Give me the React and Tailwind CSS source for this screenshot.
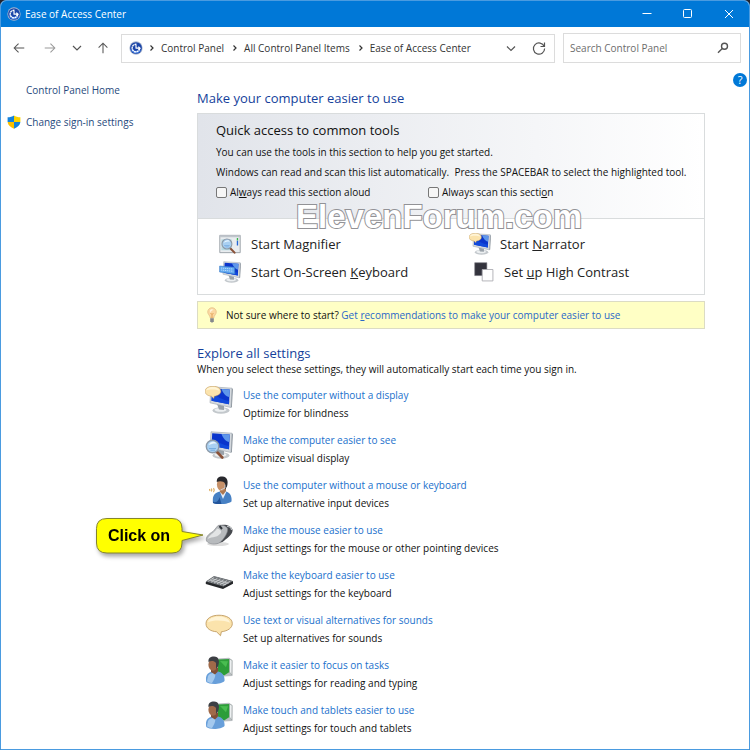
import React from "react";

function EaseLogo({ className }) {
  return (
    <svg viewBox="0 0 16 16" className={className} aria-hidden="true">
      <circle cx="8" cy="8" r="7.6" fill="#a9b6cf" />
      <circle cx="8" cy="8" r="6.7" fill="#1b45a8" />
      <path d="M2.2 8.5a5.8 5.8 0 0 0 11.4 1.2C11.500 11.500 5.500 12.500 2.200 8.500z" fill="#3f7be0" />
      <path d="M8.600 3.800A4.300 4.300 0 1 0 12.200 8" fill="none" stroke="#fff" strokeWidth="1.500" strokeDasharray="2.400 .5" />
      <path d="M8 8.300V4.600M7.500 8.200h4.800M10.700 6.400l2 1.800-2 1.600" fill="none" stroke="#fff" strokeWidth="1.300" />
    </svg>
  );
}

function Line({ d, className, width = 1.2 }) {
  return (
    <svg viewBox="0 0 16 16" className={className} fill="none" stroke="currentColor" strokeWidth={width} aria-hidden="true">
      <path d={d} />
    </svg>
  );
}

function Shield() {
  return (
    <svg viewBox="0 0 14 14" className="size-[14px] shrink-0" aria-hidden="true">
      <path d="M7 .4C5.500 1.600 3 2.200.6 2.200V7H7z" fill="#1583dc" />
      <path d="M7 .4C8.500 1.600 11 2.200 13.400 2.200V7H7z" fill="#fbd400" />
      <path d="M.6 7C.9 10.200 3.600 12.400 7 13.700V7z" fill="#fbc000" />
      <path d="M13.400 7C13.100 10.200 10.400 12.400 7 13.700V7z" fill="#1583dc" />
    </svg>
  );
}

function Monitor() {
  return (
    <>
      <ellipse cx="16" cy="24.500" rx="8.500" ry="3.300" fill="#c3c8cc" />
      <ellipse cx="15.500" cy="23.800" rx="6" ry="1.900" fill="#eceff1" />
      <path d="M12 18l7 2v4l-5-.5z" fill="#9aa2aa" />
      <path d="M6 .8L27 2.200 26 21.500 5 16.800z" fill="#d5dadf" stroke="#9ba3ab" strokeWidth=".6" />
      <path d="M27 2.200l.9 1-1 18-.9.300z" fill="#8b949d" />
      <path d="M7.200 2.300L24.800 3.500 24 18.300 6.500 14.800z" fill="#0a35cc" />
      <path d="M16.500 2.900l8.300.6-.5 7.500C21 10.500 18 7 16.500 2.900z" fill="#5f97ea" />
      <path d="M7 8c5 2 10 6 17.100 7l-.1 3.300L6.500 14.800z" fill="#1149dc" />
    </>
  );
}

function Bubble({ transform }) {
  return (
    <g transform={transform}>
      <path d="M14 4C6.500 4 1 7.500 1 13s5 8.300 10.500 8.800L15.500 26l.9-4.200C23 21 27.300 17.500 27.300 13 27.300 7.500 21.500 4 14 4z" fill="#fbe3ac" stroke="#b68e50" strokeWidth=".8" />
      <path d="M14 5.500C8 5.500 3.500 8 3 11.500 8 9 19 9 25 12 24 8 19.500 5.500 14 5.500z" fill="#fff4d6" />
    </g>
  );
}

function Lens({ transform }) {
  return (
    <g transform={transform}>
      <path d="M11.500 20.500l5.800 6" stroke="#8a5138" strokeWidth="2.600" strokeLinecap="round" />
      <circle cx="7.600" cy="15.500" r="6.300" fill="#a9d0f2" stroke="#8d9aa8" strokeWidth="1.400" />
      <path d="M3.500 14c1.500-3.500 6-4.500 8-1.500-3-.2-5.500.5-8 1.500z" fill="#e9f6ff" />
      <path d="M4 17.500h7M5.500 19.200h4.500" stroke="#6ba4dc" strokeWidth=".8" />
    </g>
  );
}

function HeadsetPerson() {
  return (
    <>
      <path d="M8 27c-.8-6 .5-10 7-11.500h6c4.500 1.500 6 5 5.500 10-4 3-13.500 3.500-18.500 1.500z" fill="#4781c4" />
      <path d="M15 16l3 7 3.500-7.500z" fill="#e6eef8" />
      <path d="M8 25.500c3 2 6-1 6.500-4.500l2 7c-3 .3-6 0-8.500-1z" fill="#22549b" />
      <path d="M15 12v4l3 3 3-4v-4z" fill="#ad7850" />
      <ellipse cx="16.500" cy="8.500" rx="4.600" ry="6.500" fill="#c69068" />
      <path d="M11.800 6C11.500 2 14 .3 17.500.5c5 .2 6 5 4.500 10l-2 3V7.500c-1-2-5-3-8.200-1.500z" fill="#28282d" />
      <path d="M20 8.500v3.500l-4.500 2" stroke="#d0d4da" strokeWidth=".9" fill="none" />
      <path d="M8.500 12.200q1.500 2 0 4M6.300 12.500q1.100 1.500 0 3M4.500 13l.5 2" stroke="#dda958" strokeWidth="1.100" fill="none" />
    </>
  );
}

function Mouse() {
  return (
    <g transform="translate(0 1)">
      <ellipse cx="13" cy="22" rx="11" ry="2" fill="#dcdcdc" />
      <path d="M14 3.500C19 1.500 26 3 27.500 7.500c.8 5-5.500 9-10 12.500L9 22z" fill="#46494e" />
      <path d="M13 3.500c4-.8 8 0 9.500 3 .8 4-3.500 10.500-7.500 14-4 2.500-11 2-13.500-1.500-1-4 2-7 6.500-9.500z" fill="#b7babd" stroke="#83878b" strokeWidth=".6" />
      <path d="M12 6.500c-2 4-8.500 7-9.500 11 2-3 9-1 13-6 1.500-2 .5-4-3.500-5z" fill="#e2e4e5" />
      <path d="M14.500 4l2.500 3" stroke="#30353b" strokeWidth="2" />
      <path d="M22 4.500c3 0 4.500 1.500 4.500 3.500" stroke="#c2c5c8" strokeWidth="1.200" fill="none" />
    </g>
  );
}

function Keyboard() {
  return (
    <g transform="translate(0 1)">
      <path d="M.8 15L9 9.500l19 4.800v2.500L18 22 .8 17z" fill="#25272a" />
      <path d="M.8 14.500L9 9l19 5-9.500 5.500z" fill="#74787c" />
      <path d="M3 14.400L9.200 10.500M6 15.200l6.500-4M9 16l6.500-4M12 16.800l6.800-4M15 17.600l7-4M18 18.400l7-4M5 13.100l16 4.500M7 11.800l16.500 4.500" stroke="#d3d5d7" strokeWidth=".75" />
    </g>
  );
}

function BookPerson() {
  return (
    <>
      <path d="M13 2.500l11-.7 3.500 2.500V20l-9 .5z" fill="#b9bec1" />
      <path d="M13 3.500l11.500-.5v13L19 19.500l-6-3z" fill="#2d9d39" />
      <path d="M24.500 3l2.500 1.500-.2 14.500-2.300-3z" fill="#edf0f1" stroke="#8c9593" strokeWidth=".5" />
      <path d="M15 5l8 .2-2 6z" fill="#49bd50" />
      <path d="M1.300 26C0 20 2.500 16 8 15.500h5c5 1 7 5 6.500 9.500-3 3.500-15 4-18.200 1z" fill="#689fda" />
      <path d="M3 20c2-3 4-3 7-3 1 3-1 7-3 10-3-.3-4.500-1-5-2z" fill="#a4c9ee" />
      <path d="M6 11v5l4 2.500 3-3v-4z" fill="#805037" />
      <ellipse cx="8" cy="8.800" rx="4.600" ry="6" fill="#a06a49" />
      <path d="M3.500 6C3 2 5.500.4 9 .4c5 0 6 5 4 10l-2 2.500V7C9 4.500 6 4.500 3.500 6z" fill="#3d3f44" />
    </>
  );
}

function Art({ children, className = "size-7" }) {
  return (
    <svg viewBox="0 0 28 28" className={className} aria-hidden="true">
      {children}
    </svg>
  );
}

const narratorArt = (
  <>
    <Monitor />
    <Bubble transform="translate(-.5 -2) scale(.6 .56)" />
  </>
);

const magnifierArt = (
  <>
    <path d="M1 3h26v22H1z" fill="#e9ecef" stroke="#9aa1a8" strokeWidth="1.200" />
    <path d="M1 3h26v2.500H1z" fill="#bfc5cb" />
    <path d="M3 8h13v14H3z" fill="#b9dbe2" />
    <path d="M23.500 6.500v3" stroke="#36b44b" strokeWidth="1.700" />
    <path d="M23.500 10v6" stroke="#2465d6" strokeWidth="1.700" />
    <Lens transform="translate(2.500 -1.500)" />
  </>
);

const oskArt = (
  <>
    <Monitor />
    <path d="M.8 6.500L20 8v8.500L.8 14z" fill="#62aaf0" stroke="#397cc9" strokeWidth=".8" />
    <path d="M2.500 9l15.500 1.200M2.500 11.500l15.500 1.600" stroke="#c9e4ff" strokeWidth="1" strokeDasharray="1.600 .9" />
  </>
);

const contrastArt = (
  <>
    <path d="M1 1h17v18H1z" fill="#33333d" stroke="#777780" strokeWidth=".8" />
    <path d="M11.500 10.500h15v16h-15z" fill="#fff" stroke="#a8a8ae" strokeWidth="1.200" />
  </>
);

const settings = [
  { title: "Use the computer without a display", text: "Optimize for blindness", art: narratorArt },
  {
    title: "Make the computer easier to see",
    text: "Optimize visual display",
    art: (
      <>
        <Monitor />
        <Lens transform="translate(0 0)" />
      </>
    ),
  },
  { title: "Use the computer without a mouse or keyboard", text: "Set up alternative input devices", art: <HeadsetPerson /> },
  { title: "Make the mouse easier to use", text: "Adjust settings for the mouse or other pointing devices", art: <Mouse />, callout: true },
  { title: "Make the keyboard easier to use", text: "Adjust settings for the keyboard", art: <Keyboard /> },
  { title: "Use text or visual alternatives for sounds", text: "Set up alternatives for sounds", art: <Bubble transform="translate(0 .5) scale(1 .93)" /> },
  { title: "Make it easier to focus on tasks", text: "Adjust settings for reading and typing", art: <BookPerson /> },
  { title: "Make touch and tablets easier to use", text: "Adjust settings for touch and tablets", art: <BookPerson /> },
];

function TitleBar() {
  return (
    <header className="flex h-[26px] items-center bg-[#0078d7] pl-[6px] text-white">
      <EaseLogo className="size-[14px]" />
      <h1 className="ml-1 flex-1">Ease of Access Center</h1>
      <button aria-label="Minimize" className="flex h-full w-[41px] items-center justify-center">
        <Line d="M3.500 7.500h9" className="size-4" width={1} />
      </button>
      <button aria-label="Maximize" className="flex h-full w-[41px] items-center justify-center">
        <svg viewBox="0 0 16 16" className="size-4" fill="none" stroke="currentColor" aria-hidden="true">
          <rect x="3.500" y="3.500" width="8" height="8" rx="1" />
        </svg>
      </button>
      <button aria-label="Close" className="flex h-full w-[41px] items-center justify-center">
        <Line d="M4 4l8 8M12 4l-8 8" className="size-4" width={1} />
      </button>
    </header>
  );
}

function Crumb({ children }) {
  return (
    <li className="flex items-center pr-[2px]">
      <Line d="M6.500 5.500L9 8l-2.500 2.500" className="mx-[1px] size-4" />
      <a href="#" className="whitespace-nowrap">{children}</a>
    </li>
  );
}

function NavBar() {
  return (
    <div className="flex items-center gap-[8px] pt-[6px] pb-[7px] pr-2 text-[#555]">
      <nav aria-label="History" className="flex w-[112px] items-center pl-[9px]">
        <button aria-label="Back" className="w-[31px]"><Line d="M14 8H2.500M7.500 3l-5 5 5 5" className="size-[18px] p-[2px]" /></button>
        <button aria-label="Forward" className="w-[28px] text-[#999]"><Line d="M2 8h11.500M8.500 3l5 5-5 5" className="size-[18px] p-[2px]" /></button>
        <button aria-label="Recent locations" className="w-[25px]"><Line d="M4 6l4 4 4-4" className="size-4" /></button>
        <button aria-label="Up"><Line d="M8 14V2.500M3 7.500l5-5 5 5" className="size-[18px] p-[2px]" /></button>
      </nav>
      <div className="flex h-[29px] flex-1 items-center border border-[#dcdcdc] pr-[7px] pl-[7px]">
        <EaseLogo className="size-[14px] shrink-0" />
        <ol className="flex flex-1 items-center text-[#333]">
          <Crumb>Control Panel</Crumb>
          <Crumb>All Control Panel Items</Crumb>
          <Crumb>Ease of Access Center</Crumb>
        </ol>
        <button aria-label="Previous locations"><Line d="M4 6.500l4 4 4-4" className="size-4" /></button>
        <button aria-label="Refresh" className="ml-[12px]">
          <Line d="M13.200 6.500A5.600 5.600 0 1 0 13.600 8.500M13.500 2.500v4h-4" className="size-4" />
        </button>
      </div>
      <div className="flex h-[30px] w-[178px] items-center border border-[#dcdcdc] pr-[9px] pl-[6px]">
        <input aria-label="Search Control Panel" placeholder="Search Control Panel" className="min-w-0 flex-1 bg-transparent outline-none placeholder:text-[#6d6d6d]" />
        <button aria-label="Search">
          <svg viewBox="0 0 16 16" className="size-4" fill="none" stroke="currentColor" strokeWidth="1.400" aria-hidden="true">
            <circle cx="9.500" cy="6.300" r="3" />
            <path d="M7.300 8.600L3 12.800" />
          </svg>
        </button>
      </div>
    </div>
  );
}

function Tool({ art, children, className = "" }) {
  return (
    <a href="#" className={"flex h-[28px] items-center text-[13px] text-[#222] " + className}>
      {art}
      <span>{children}</span>
    </a>
  );
}

function QuickAccess() {
  return (
    <section className="mt-[5px] border border-[#d9dcdd]">
      <div className="relative h-[105px] border-b border-[#d9dcdd] bg-linear-to-r from-[#e1e4ea] to-white pt-[6px] pl-[18px]">
        <h3 className="text-[13px] leading-[20px] text-[#111]">Quick access to common tools</h3>
        <p className="mt-[2px] leading-[20px]">You can use the tools in this section to help you get started.</p>
        <p className="leading-[20px] whitespace-pre">Windows can read and scan this list automatically.  Press the SPACEBAR to select the highlighted tool.</p>
        <div className="flex leading-[20px]">
          <label className="flex w-[212px] items-center gap-[3px]">
            <input type="checkbox" className="size-[11px] appearance-none rounded-[2px] border border-[#777] bg-[#f6f6f6]" />
            <span>Al<u>w</u>ays read this section aloud</span>
          </label>
          <label className="flex items-center gap-[3px]">
            <input type="checkbox" className="size-[11px] appearance-none rounded-[2px] border border-[#777] bg-[#f6f6f6]" />
            <span>Always scan this secti<u>o</u>n</span>
          </label>
        </div>
        <span className="absolute top-[87px] left-[98px] font-['Liberation_Sans',sans-serif] text-[33px] leading-[32px] font-bold text-white [-webkit-text-stroke:2px_#929296] [paint-order:stroke_fill]">ElevenForum.com</span>
      </div>
      <div className="grid grid-cols-[250px_1fr] pt-[11px] pb-[8px] pl-[21px]">
        <Tool art={<Art className="mr-[10px] size-[22px]">{magnifierArt}</Art>}>Start Ma<u>g</u>nifier</Tool>
        <Tool art={<Art className="mr-[9px] size-[22px]">{narratorArt}</Art>}>Start <u>N</u>arrator</Tool>
        <Tool art={<Art className="mr-[10px] size-[22px]">{oskArt}</Art>}>Start On-Screen <u>K</u>eyboard</Tool>
        <Tool className="pl-[5px]" art={<Art className="mr-[10px] size-[20px]">{contrastArt}</Art>}>Set <u>u</u>p High Contrast</Tool>
      </div>
    </section>
  );
}

function Tip() {
  return (
    <p className="mt-[6px] flex h-[28px] items-center border border-[#dcdcc4] bg-[#ffffc5] pl-[7px]">
      <svg viewBox="0 0 14 16" className="mr-[7px] h-4 w-[14px]" aria-hidden="true">
        <path d="M7 .7a4.300 4.300 0 0 0-4.300 4.300c0 2.400 2.300 3.200 2.500 6h3.600c.2-2.800 2.500-3.600 2.500-6A4.300 4.300 0 0 0 7 .7z" fill="#fbd9a2" stroke="#dfb27a" strokeWidth=".6" />
        <path d="M5 3.500c1-1.500 2.500-1.500 3.500-.5-1.500 0-2.500 1-3 3z" fill="#fff8e5" />
        <path d="M5.500 6l1.500 1.500L8.500 6M7 7.500V11" stroke="#d88d3b" strokeWidth=".7" fill="none" />
        <path d="M5.200 11.300h3.600v2.900L7.600 15.500H6.400l-1.200-1.300z" fill="#85888c" />
      </svg>
      <span>Not sure where to start? <a href="#" className="text-[#2a68c8]">Get <u>r</u>ecommendations to make your computer easier to use</a></span>
    </p>
  );
}

function Callout() {
  return (
    <div className="absolute top-[-3px] left-[-109px] h-[36px] w-[108px] drop-shadow-[2px_3px_2px_rgba(0,0,0,0.35)]">
      <svg viewBox="0 0 108 36" className="absolute inset-0 size-full" aria-hidden="true">
        <path d="M11 .5h65q10 0 10 10v3L107 17 86 22.500v2.500q0 10-10 10H11q-10.500 0-10.500-10V10.500Q.5.5 11 .5z" fill="#ff0" stroke="#85852d" />
      </svg>
      <span className="relative block w-[86px] text-center font-['Liberation_Sans',sans-serif] text-[16px] leading-[35px] font-bold text-black">Click on</span>
    </div>
  );
}

export default function App() {
  return (
    <div className="min-h-screen bg-[#24242c] font-['Open_Sans','Noto_Sans',sans-serif] text-[10px] leading-[16px] text-[#111]">
      <div className="flex min-h-screen flex-col overflow-hidden rounded-t-[6px] border border-[#4a9be0] bg-white">
        <TitleBar />
        <NavBar />
        <div className="flex pb-[10px]">
          <aside className="flex w-[196px] shrink-0 flex-col gap-4 pt-[12px] pl-[6px] text-[#1f4a7d]">
            <a href="#" className="pl-[19px]">Control Panel Home</a>
            <a href="#" className="flex items-center gap-[5px]"><Shield />Change sign-in settings</a>
          </aside>
          <main className="min-w-0 flex-1 pt-[18px]">
            <h2 className="text-[13px] leading-[20px] text-[#153f9b]">Make your computer easier to use</h2>
            <QuickAccess />
            <Tip />
            <h2 className="mt-[14px] text-[13px] leading-[20px] text-[#153f9b]">Explore all settings</h2>
            <p className="leading-[12px]">When you select these settings, they will automatically start each time you sign in.</p>
            <ul className="mt-[11px] flex flex-col gap-[9px] pl-[8px]">
              {settings.map((s) => (
                <li key={s.title} className="relative flex h-[36px] items-start gap-[10px]">
                  <Art className="size-7 shrink-0">{s.art}</Art>
                  <div className="leading-[18px]">
                    <a href="#" className="block text-[#1a70cc]">{s.title}</a>
                    <p>{s.text}</p>
                  </div>
                  {s.callout && <Callout />}
                </li>
              ))}
            </ul>
          </main>
          <div className="w-[44px] shrink-0 pt-[2px] pr-[2px] text-right">
            <button aria-label="Help" className="size-[14px] rounded-full bg-[#0078d7] text-center text-[11px] leading-[14px] text-white">?</button>
          </div>
        </div>
      </div>
    </div>
  );
}
